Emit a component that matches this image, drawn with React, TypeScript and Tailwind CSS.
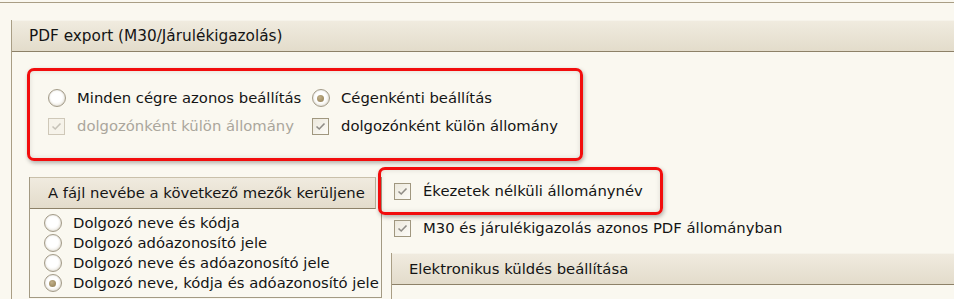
import React from "react";

function Radio({ checked = false }: { checked?: boolean }) {
  return (
    <span className="w-[19px] h-[19px] flex items-center justify-center shrink-0">
      <span className="w-[18px] h-[18px] rounded-full border-[1.5px] border-[#a39b88] bg-[radial-gradient(circle_at_45%_40%,#ffffff_45%,#e6e1d4_100%)] shadow-[inset_0_0_2px_rgba(120,110,90,0.35)] flex items-center justify-center">
        {checked && (
          <span className="w-[7px] h-[7px] rounded-full bg-[radial-gradient(circle_at_40%_35%,#c2b08a,#8e7b50)]" />
        )}
      </span>
    </span>
  );
}

function Checkbox({ disabled = false }: { disabled?: boolean }) {
  return (
    <span className="w-[19px] h-[19px] flex items-center justify-center shrink-0">
      <span
        className={
          disabled
            ? "w-[17px] h-[17px] border border-[#cfc8b8] bg-[#f6f3ea] flex items-center justify-center"
            : "w-[17px] h-[17px] border border-[#a0977f] bg-gradient-to-br from-[#ece8dc] to-[#fdfcf8] flex items-center justify-center"
        }
      >
        <svg width="11" height="9" viewBox="0 0 11 9">
          <polyline
            points="1.5,4.5 4.2,7 9.5,1.5"
            fill="none"
            stroke={disabled ? "#c6c2b8" : "#8f8c86"}
            strokeWidth="1.6"
          />
        </svg>
      </span>
    </span>
  );
}

function Option({
  control,
  label,
  disabled = false,
}: {
  control: React.ReactNode;
  label: string;
  disabled?: boolean;
}) {
  return (
    <div className="flex items-center gap-[11px] whitespace-nowrap">
      {control}
      <span className={disabled ? "text-[#aaa69c]" : ""}>{label}</span>
    </div>
  );
}

const redBox =
  "border-[3px] border-[#f20d0d] rounded-[7px] shadow-[inset_0_0_5px_rgba(0,0,0,0.12),1px_2px_4px_rgba(0,0,0,0.3)]";

export default function App() {
  return (
    <div className="w-[954px] h-[299px] overflow-hidden bg-[#faf8f0] text-[14.8px] text-[#141414] font-['DejaVu_Sans',sans-serif]">
      <div className="mt-[2px] border-t border-[#a99e85]" />

      <div className="ml-[11px] mt-[17px] h-[280px] border-l border-[#a99e85]">
        <div className="h-[32px] border-t border-[#f6f3ea] border-b border-b-[#8d8168] bg-gradient-to-b from-[#f0ebdf] to-[#e3dccb] pl-[17px] flex items-center text-[15.3px]">
          PDF export (M30/Járulékigazolás)
        </div>

        {/* company settings */}
        <div className={`ml-[15px] mt-[16px] w-[556px] h-[93px] ${redBox}`}>
          <div className="pt-[13px] pl-[17px] grid grid-cols-[264px_1fr]">
            <div className="h-[28px] flex items-center">
              <Option control={<Radio />} label="Minden cégre azonos beállítás" />
            </div>
            <div className="h-[28px] flex items-center">
              <Option control={<Radio checked />} label="Cégenkénti beállítás" />
            </div>
            <div className="h-[28px] flex items-center">
              <Option control={<Checkbox disabled />} label="dolgozónként külön állomány" disabled />
            </div>
            <div className="h-[28px] flex items-center">
              <Option control={<Checkbox />} label="dolgozónként külön állomány" />
            </div>
          </div>
        </div>

        <div className="flex items-start">
          {/* file name group */}
          <div className="ml-[17px] mt-[16px] w-[353px] h-[121px] border border-t-0 border-[#a39a83] overflow-hidden shrink-0">
            <div className="h-[32px] mr-[5px] border-t border-[#c9c0aa] border-b border-b-[#8d8168] border-r border-r-[#b9b09a] bg-gradient-to-b from-[#f0ebdf] to-[#e3dccb] pl-[18px] flex items-center whitespace-nowrap">
              A fájl nevébe a következő mezők kerüljene
            </div>
            <div className="pt-[4px] pl-[13px]">
              {[
                ["Dolgozó neve és kódja", false],
                ["Dolgozó adóazonosító jele", false],
                ["Dolgozó neve és adóazonosító jele", false],
                ["Dolgozó neve, kódja és adóazonosító jele", true],
              ].map(([label, checked]) => (
                <div key={label as string} className="h-[20px] flex items-center">
                  <Option control={<Radio checked={checked as boolean} />} label={label as string} />
                </div>
              ))}
            </div>
          </div>

          {/* right column */}
          <div className="relative z-10 -ml-[4px] flex-1">
            <div className={`mt-[6px] w-[285px] h-[48px] ${redBox} pl-[12px] flex items-center`}>
              <Option control={<Checkbox />} label="Ékezetek nélküli állománynév" />
            </div>
            <div className="h-[26px] pl-[15px] flex items-center">
              <Option control={<Checkbox />} label="M30 és járulékigazolás azonos PDF állományban" />
            </div>
            <div className="mt-[12px] ml-[13px] h-[60px] border-l border-[#a99e85]">
              <div className="h-[32px] border-t border-[#f6f3ea] border-b border-b-[#8d8168] bg-gradient-to-b from-[#f0ebdf] to-[#e3dccb] pl-[17px] flex items-center">
                Elektronikus küldés beállítása
              </div>
            </div>
          </div>
        </div>
      </div>
    </div>
  );
}
